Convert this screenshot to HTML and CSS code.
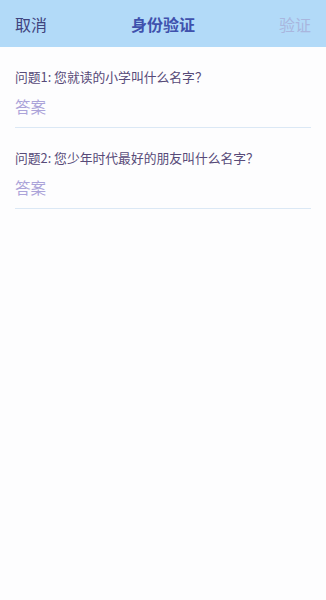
FILE: index.html
```html
<!DOCTYPE html>
<html lang="zh">
<head>
    <meta charset="UTF-8">
    <meta name="viewport" content="width=device-width, initial-scale=1.0">
    <title>身份验证</title>
    <link rel="stylesheet" href="styles.css">
</head>
<body>

    <!-- Top Bar -->
    <div class="top-bar">
        <span class="bar-btn cancel">取消</span>
        <span class="bar-title">身份验证</span>
        <span class="bar-btn verify">验证</span>
    </div>

    <!-- Questions -->
    <div class="question-list">
        <div class="question">
            <div class="question-text">问题1: 您就读的小学叫什么名字？</div>
            <input type="text" class="answer" placeholder="答案">
        </div>
        <div class="question">
            <div class="question-text">问题2: 您少年时代最好的朋友叫什么名字？</div>
            <input type="text" class="answer" placeholder="答案">
        </div>
    </div>

</body>
</html>
```

FILE: styles.css
```css
/* General Reset */
* {
    margin: 0;
    padding: 0;
    box-sizing: border-box;
}

body {
    font-family: "Noto Sans CJK SC", "Noto Sans", sans-serif;
    background-color: #fdfdfe;
    min-height: 100vh;
}

/* Top Bar */
.top-bar {
    height: 47px;
    background-color: #b2daf8;
    display: flex;
    align-items: center;
    justify-content: space-between;
    padding: 0 15px;
    position: relative;
}

.bar-btn {
    font-size: 16px;
}

.cancel {
    color: #40437e;
}

.verify {
    color: #a9b6de;
}

.bar-title {
    position: absolute;
    left: 0;
    right: 0;
    text-align: center;
    font-size: 16px;
    font-weight: bold;
    color: #3f51ad;
    pointer-events: none;
}

/* Questions */
.question-list {
    padding: 0 15px;
}

.question {
    padding-top: 20px;
    border-bottom: 1px solid #dbe8f5;
}

.question-text {
    font-size: 12.8px;
    line-height: 20px;
    color: #574a78;
}

.answer {
    width: 100%;
    border: none;
    outline: none;
    background: transparent;
    font-family: inherit;
    font-size: 15.5px;
    height: 40px;
    color: #333;
    padding-bottom: 3px;
}

.answer::placeholder {
    color: #aba3d9;
}
```
